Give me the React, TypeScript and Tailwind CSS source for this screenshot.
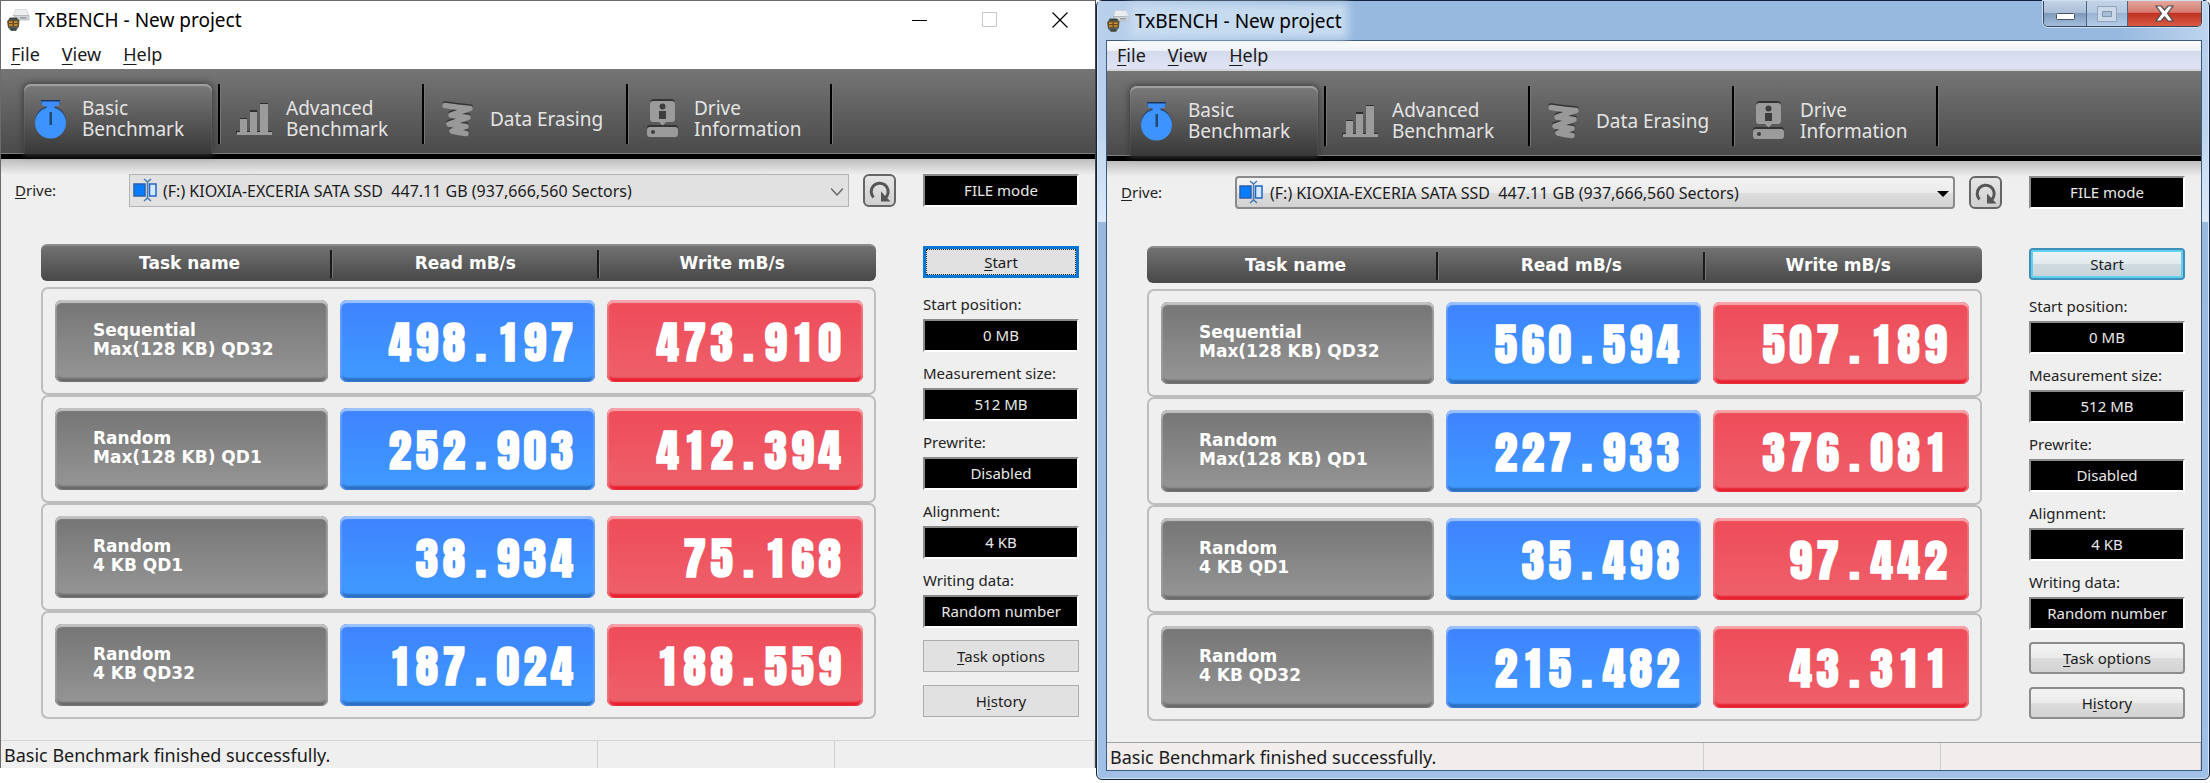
import { clsx } from 'clsx';
import type { ReactNode } from 'react';

type Theme = 'win10' | 'win7';

type Task = {
  name: [string, string];
  read: string;
  write: string;
};

type BenchProps = {
  id: string;
  theme: Theme;
  tasks: Task[];
};

const TASK_NAMES: [string, string][] = [
  ['Sequential', 'Max(128 KB) QD32'],
  ['Random', 'Max(128 KB) QD1'],
  ['Random', '4 KB QD1'],
  ['Random', '4 KB QD32'],
];

const makeTasks = (results: [string, string][]): Task[] =>
  results.map(([read, write], i) => ({ name: TASK_NAMES[i], read, write }));

const WIN10_TASKS = makeTasks([
  ['498.197', '473.910'],
  ['252.903', '412.394'],
  ['38.934', '75.168'],
  ['187.024', '188.559'],
]);

const WIN7_TASKS = makeTasks([
  ['560.594', '507.189'],
  ['227.933', '376.081'],
  ['35.498', '97.442'],
  ['215.482', '43.311'],
]);

const SETTINGS = [
  { key: 'start', label: 'Start position:', value: '0 MB' },
  { key: 'size', label: 'Measurement size:', value: '512 MB' },
  { key: 'prewrite', label: 'Prewrite:', value: 'Disabled' },
  { key: 'align', label: 'Alignment:', value: '4 KB' },
  { key: 'data', label: 'Writing data:', value: 'Random number' },
];

const AppIcon = () => (
  <svg aria-hidden="true" className="h-6 w-6 shrink-0" viewBox="0 0 24 24">
    <path d="M9.500 1.500h11L23 7.500H7.500z" fill="#eceef0" stroke="#c9ccd0" strokeWidth=".6" />
    <path d="M7 7.500h16V12H12z" fill="#d3d6d9" stroke="#a3a6aa" strokeWidth=".6" />
    <path d="M14 9.800h6.500" stroke="#85898d" strokeWidth="1.200" />
    <path d="M4 9.500h7l2.500 3-.5 6-3 4.500H5l-3-3.500-1-6z" fill="#59635c" />
    <path d="M2 12.500h10.500v6H2z" fill="#6a4a1c" />
    <path d="M3 14.200h3.500M8 14.200h3.500M3 17h3.500M8 17h3.500" stroke="#d99a3a" strokeWidth="1.500" />
    <path d="M3.500 10.800h7.500M4.500 21h5.500" stroke="#39413b" strokeWidth="1.500" />
  </svg>
);

const StopwatchIcon = () => (
  <svg aria-hidden="true" className="h-10 w-10 shrink-0" viewBox="0 0 40 40">
    <path d="M9 1h19v4H9z" fill="#1d3763" />
    <circle cx="18.500" cy="22.500" fill="#2b4370" r="15.500" />
    <path d="M9 2.500h19l-1.500 4.500h-4v4h-8V7h-4z" fill="#3d8fff" />
    <circle cx="18.500" cy="24" fill="#3d93ff" r="15.500" />
    <path d="M17.500 13H20v13h-2.500z" fill="#24466f" />
  </svg>
);

const BarsIcon = () => (
  <svg aria-hidden="true" className="h-10 w-10 shrink-0" viewBox="0 0 40 40">
    <path d="M4 19h7v2H4zM14 11h7v2h-7zM24 4h8v2h-8zM0 32h36v2H0z" fill="#2f2f2f" />
    <path d="M4 20h7v13H4zM14 13h7v20h-7zM24 5h8v28h-8z" fill="#9b9b9b" />
    <path d="M1 33h35v3H1z" fill="#9b9b9b" />
  </svg>
);

const ScribbleIcon = () => (
  <svg aria-hidden="true" className="h-10 w-10 shrink-0" fill="none" viewBox="0 0 40 40">
    <g strokeLinecap="round" strokeLinejoin="round" strokeWidth="5.500">
      <path
        d="M5 5q13 2 25 3L11 14.500q9 2 17 2.500L9 23.500q9 2 17 2.500L12 30.500q7 1.500 14 2.500"
        stroke="#333"
      />
      <path
        d="M5 6.500q13 2 25 3L11 16q9 2 17 2.500L9 25q9 2 17 2.500L12 32q7 1.500 14 2.500"
        stroke="#999"
      />
    </g>
  </svg>
);

const DriveInfoIcon = () => (
  <svg aria-hidden="true" className="h-10 w-10 shrink-0" viewBox="0 0 40 40">
    <rect fill="#333" height="21" rx="4" width="25" x="6" y="0" />
    <rect fill="#333" height="10" rx="3" width="31" x="3" y="26" />
    <path
      d="M9 2h19q3 0 3 3v15q0 3-3 3h-6l-3.500 3.500L15 23H9q-3 0-3-3V5q0-3 3-3z"
      fill="#9b9b9b"
    />
    <circle cx="18.500" cy="7.500" fill="#3d3d3d" r="3" />
    <path d="M15 12h7v8h-7z" fill="#3d3d3d" />
    <rect fill="#9b9b9b" height="10" rx="3" width="31" x="3" y="28" />
    <circle cx="9" cy="33" fill="#3d3d3d" r="2" />
  </svg>
);

const DriveIcon = () => (
  <svg aria-hidden="true" className="h-6 w-6" fill="none" viewBox="0 0 24 24">
    <path d="M1 6h11v12H1z" fill="#0a7cff" stroke="#2b5ea8" strokeWidth="1.500" />
    <path d="M16.500 6H23v12h-6.500z" fill="#d3e9ff" stroke="#1f66c4" strokeWidth="1.500" />
    <path d="M14.500 4v16M11 1l3.500 3L18 1M11 23l3.500-3 3.500 3" stroke="#4a78b0" strokeWidth="1.500" />
  </svg>
);

const ReloadIcon = () => (
  <svg aria-hidden="true" className="h-6 w-6" fill="none" viewBox="0 0 24 24">
    <path
      d="M5.500 18.500A8.500 8.500 0 1 1 19 17l-1.500 1.500"
      stroke="#555"
      strokeWidth="3"
    />
    <path d="M13 12.500v10h9.500z" fill="#555" />
  </svg>
);

const TABS: { lines: string[]; icon: ReactNode; active?: boolean }[] = [
  { lines: ['Basic', 'Benchmark'], icon: <StopwatchIcon />, active: true },
  { lines: ['Advanced', 'Benchmark'], icon: <BarsIcon /> },
  { lines: ['Data Erasing'], icon: <ScribbleIcon /> },
  { lines: ['Drive', 'Information'], icon: <DriveInfoIcon /> },
];

const MenuBar = ({ theme }: { theme: Theme }) => (
  <nav
    className={clsx(
      'flex h-[30px] items-center gap-[22px] pl-2.5 text-[18px] leading-6 text-[#1a1a1a]',
      theme === 'win7' &&
        'border-b-2 border-[#d4d4d8] bg-[linear-gradient(to_bottom,#ffffff,#eef1f9_35%,#d4dbed_36%,#dfe4f4)]',
    )}
  >
    {['File', 'View', 'Help'].map((item) => (
      <button key={item} type="button">
        <u className="underline-offset-3">{item[0]}</u>
        {item.slice(1)}
      </button>
    ))}
  </nav>
);

const Toolbar = () => (
  <div
    className="flex h-[90px] border-b-[5px] border-black bg-[linear-gradient(to_bottom,#757575,#4a4a4a)] pl-4 shadow-[inset_0_-1px_0_#808080]"
    role="tablist"
  >
    {TABS.map(({ lines, icon, active }) => (
      <div className="flex w-[204px] pt-[15px]" key={lines.join()}>
        <button
          aria-selected={!!active}
          className={clsx(
            'mr-1.5 ml-[7px] flex flex-1 items-center gap-2.5 pl-2 text-left text-[19px] leading-[21px] text-[#e4e4e4]',
            active &&
              'rounded-t-[7px] bg-[linear-gradient(to_bottom,#7a7a7a,#383838)] shadow-[inset_0_2px_1px_#a2a2a2,0_0_6px_1px_#3d3d3d]',
          )}
          role="tab"
          type="button"
        >
          {icon}
          <span>
            {lines.map((line) => (
              <span className="block whitespace-nowrap" key={line}>
                {line}
              </span>
            ))}
          </span>
        </button>
        <span className="h-[60px] w-[3px] border-r border-l-2 border-l-black border-r-[#777]" />
      </div>
    ))}
  </div>
);

const DriveRow = ({ id, theme }: { id: string; theme: Theme }) => (
  <div className="flex h-[33px] items-center pl-[14px]">
    <label className="w-[114px] text-[15px] text-[#222]" htmlFor={`${id}-drive`}>
      <u className="underline-offset-2">D</u>rive:
    </label>
    <div className="relative h-full flex-1">
      <select
        className={clsx(
          'h-full w-full appearance-none pl-[33px] text-[16px] text-[#1c1c1c]',
          theme === 'win10'
            ? 'border border-[#b3b3b3] bg-[#e1e1e1]'
            : 'rounded-[4px] border-2 border-[#8a8a8a] bg-[linear-gradient(to_bottom,#f3f3f3,#ebebeb_50%,#dddddd_51%,#d2d2d2)]',
        )}
        id={`${id}-drive`}
      >
        <option>(F:) KIOXIA-EXCERIA SATA SSD{'\u00a0 '}447.11 GB (937,666,560 Sectors)</option>
      </select>
      <span className="pointer-events-none absolute top-1 left-1">
        <DriveIcon />
      </span>
      <svg
        aria-hidden="true"
        className="pointer-events-none absolute top-3 right-1.5 h-3 w-3"
        fill="none"
        viewBox="0 0 12 12"
      >
        {theme === 'win10' ? (
          <path d="M0 2.500 6 9l6-6.500" stroke="#666" strokeWidth="1.500" />
        ) : (
          <path d="M0 3h12L6 9z" fill="#000" />
        )}
      </svg>
    </div>
    <button
      aria-label="Reload drives"
      className="ml-[14px] flex h-[33px] w-[33px] items-center justify-center rounded-[6px] border-2 border-[#666] bg-[linear-gradient(to_bottom,#e6e6e6,#cfcfcf)]"
      type="button"
    >
      <ReloadIcon />
    </button>
  </div>
);

// Every character sits in a cell of its own so that the columns line up.
const Readout = ({ value }: { value: string }) => (
  <span className="flex justify-end pt-[3px] font-[Anton,Impact,'Roboto_Condensed',sans-serif] text-[45px] leading-[45px] font-bold text-white">
    {value.split('').map((char, i) => (
      // biome-ignore lint/suspicious/noArrayIndexKey: characters repeat
      <span className="w-[27px] text-center" key={i}>
        {char}
      </span>
    ))}
  </span>
);

const TILE = 'flex h-[82px] flex-col justify-center rounded-[7px]';

const HEADERS = ['Task name', 'Read mB/s', 'Write mB/s'];

const ResultTable = ({ tasks }: { tasks: Task[] }) => (
  <table className="w-full table-fixed border-separate border-spacing-0">
    <colgroup>
      <col className="w-[35%]" />
      <col className="w-[32%]" />
      <col className="w-[33%]" />
    </colgroup>
    <thead>
      <tr className="font-['DejaVu_Sans',sans-serif] text-[17px] text-white">
        {HEADERS.map((header, i) => (
          <th className="p-0 pb-1.5" key={header}>
            <div
              className={clsx(
                'flex h-[37px] items-center border-t-2 border-[#8c8c8c] bg-[linear-gradient(to_bottom,#727272,#484848)]',
                i === 0 && 'rounded-l-[6px] pl-2',
                i === 2 && 'rounded-r-[6px] pr-3',
              )}
            >
              <span className="flex-1">{header}</span>
              {i < 2 && (
                <span className="h-7 w-[3px] border-r border-l-2 border-l-[#1a1a1a] border-r-[#777]" />
              )}
            </div>
          </th>
        ))}
      </tr>
    </thead>
    <tbody>
      {tasks.map(({ name, read, write }) => (
        <tr key={name.join()}>
          <td className="rounded-l-[7px] border-2 border-r-0 border-[#bdbdbd] py-[11px] pr-[5px] pl-3">
            <div
              className={clsx(
                TILE,
                "bg-[linear-gradient(to_bottom,#757575,#969696)] pb-0.5 pl-[38px] font-['DejaVu_Sans',sans-serif] text-[17px] leading-[19px] font-bold text-white shadow-[inset_0_3px_1px_#c2c2c2,inset_2px_0_1px_#9a9a9a,inset_-2px_0_1px_#9a9a9a,inset_0_-4px_2px_#6a6a6a]",
              )}
            >
              <span>{name[0]}</span>
              <span>{name[1]}</span>
            </div>
          </td>
          <td className="border-y-2 border-[#bdbdbd] py-[11px] pr-[5px] pl-[7px]">
            <div
              className={clsx(
                TILE,
                'bg-[linear-gradient(to_bottom,#3f82ff,#3f9bff)] pr-5 shadow-[inset_0_3px_1px_#9cc2ff,inset_2px_0_1px_#5b9aff,inset_-2px_0_1px_#5b9aff,inset_0_-4px_2px_#2d6fc0]',
              )}
            >
              <Readout value={read} />
            </div>
          </td>
          <td className="rounded-r-[7px] border-2 border-l-0 border-[#bdbdbd] py-[11px] pr-[11px] pl-[7px]">
            <div
              className={clsx(
                TILE,
                'bg-[linear-gradient(to_bottom,#ee4b58,#ee616b)] pr-5 shadow-[inset_0_3px_1px_#f7a3aa,inset_2px_0_1px_#f06d78,inset_-2px_0_1px_#f06d78,inset_0_-4px_2px_#e6202f]',
              )}
            >
              <Readout value={write} />
            </div>
          </td>
        </tr>
      ))}
    </tbody>
  </table>
);

const FIELD =
  'flex h-[33px] items-center justify-center border-2 border-t-[#8a8a8a] border-r-white border-b-white border-l-[#8a8a8a] bg-black text-[15px] text-[#e8e8e8]';

const SideButton = ({
  theme,
  primary,
  children,
}: {
  theme: Theme;
  primary?: boolean;
  children: ReactNode;
}) => (
  <button
    className={clsx(
      'h-8 w-full text-[15px] text-[#1c1c1c]',
      theme === 'win10' && !primary && 'border border-[#adadad] bg-[#e1e1e1]',
      theme === 'win10' &&
        primary &&
        'bg-[#e1e1e1] outline-1 -outline-offset-4 outline-dotted outline-[#222] shadow-[inset_0_0_0_3px_#0b78d6]',
      theme === 'win7' &&
        !primary &&
        'rounded-[4px] border-2 border-[#8c8c8c] bg-[linear-gradient(to_bottom,#f3f3f3,#ebebeb_50%,#dddddd_51%,#d2d2d2)]',
      theme === 'win7' &&
        primary &&
        'rounded-[4px] border-2 border-[#3f8fb8] bg-[linear-gradient(to_bottom,#eef3f5,#e2eaee_50%,#cfdbe1_51%,#c5d4da)] shadow-[inset_0_0_0_2px_#5fd0f0]',
    )}
    type="button"
  >
    {children}
  </button>
);

const SidePanel = ({ id, theme }: { id: string; theme: Theme }) => (
  <aside className="w-[156px] shrink-0 text-[15px] text-[#222]">
    <output className={FIELD}>FILE mode</output>
    <div className="mt-[39px] mb-[11px]">
      <SideButton primary theme={theme}>
        {theme === 'win10' ? (
          <>
            <u className="underline-offset-2">S</u>tart
          </>
        ) : (
          'Start'
        )}
      </SideButton>
    </div>
    {SETTINGS.map(({ key, label, value }) => (
      <div className="mb-1.5" key={key}>
        <label className="block h-[30px] leading-[30px] whitespace-nowrap" htmlFor={`${id}-${key}`}>
          {label}
        </label>
        <output className={FIELD} id={`${id}-${key}`}>
          {value}
        </output>
      </div>
    ))}
    <div className="mt-3 flex flex-col gap-[13px]">
      <SideButton theme={theme}>
        <u className="underline-offset-2">T</u>ask options
      </SideButton>
      <SideButton theme={theme}>
        H<u className="underline-offset-2">i</u>story
      </SideButton>
    </div>
  </aside>
);

const StatusBar = ({ theme }: { theme: Theme }) => (
  <footer
    className={clsx(
      'flex h-7 border-t',
      theme === 'win10' ? 'border-[#d5d5d5] bg-[#efefef]' : 'border-[#a0a0a0] bg-[#f1eded]',
    )}
  >
    <p className="flex-1 pl-[3px] text-[18px] leading-7 text-[#1a1a1a]">
      Basic Benchmark finished successfully.
    </p>
    <span className="w-[237px] border-l border-[#d0d0d0]" />
    <span className="w-[261px] border-x border-[#d0d0d0]" />
  </footer>
);

const Bench = ({ id, theme, tasks }: BenchProps) => (
  <div className="bg-[#efefef]">
    <div className={theme === 'win10' ? 'bg-white' : ''}>
      <MenuBar theme={theme} />
    </div>
    <Toolbar />
    <div className="flex gap-[27px] bg-[linear-gradient(to_bottom,#bdbdbd,#efefef_16px)] pt-[15px] pr-4 pb-[21px]">
      <div className="min-w-0 flex-1">
        <DriveRow id={id} theme={theme} />
        <div className="mt-[37px] mr-5 ml-10">
          <ResultTable tasks={tasks} />
        </div>
      </div>
      <SidePanel id={id} theme={theme} />
    </div>
    <StatusBar theme={theme} />
  </div>
);

const Win10Window = () => (
  <section className="self-start border-t border-r border-l border-t-[#6b6b6b] border-r-[#444] border-l-[#6b6b6b]">
    <header className="flex h-[38px] items-center gap-[5px] bg-white pl-[5px]">
      <AppIcon />
      <h1 className="flex-1 text-[19px] text-black">TxBENCH - New project</h1>
      <div className="flex h-full">
        <button aria-label="Minimize" className="flex w-[70px] items-center justify-center" type="button">
          <svg className="h-4 w-4" viewBox="0 0 16 16">
            <path d="M0 8.500h15" stroke="#000" />
          </svg>
        </button>
        <button
          aria-label="Maximize"
          className="flex w-[70px] items-center justify-center"
          disabled
          type="button"
        >
          <svg className="h-4 w-4" fill="none" viewBox="0 0 16 16">
            <path d="M.5.5h14v14H.5z" stroke="#c8c8c8" />
          </svg>
        </button>
        <button aria-label="Close" className="flex w-[70px] items-center justify-center" type="button">
          <svg className="h-4 w-4" fill="none" viewBox="0 0 16 16">
            <path d="m.5.5 15 15m0-15-15 15" stroke="#000" strokeWidth="1.200" />
          </svg>
        </button>
      </div>
    </header>
    <Bench id="win10" tasks={WIN10_TASKS} theme="win10" />
  </section>
);

const Win7Window = () => (
  <section className="self-start rounded-[6px] border border-[#14233b] bg-[linear-gradient(to_bottom,#b5cde9,#bad2ed_120px,#dceaf8_221px,#98b9dd_221px,#a0c0e6)] pr-[7px] pb-2 pl-[9px] shadow-[inset_0_0_0_1px_#d5e5f5]">
    <header className="-mr-1.5 -ml-2 flex h-[39px] items-start bg-[linear-gradient(to_right,#bad1eb,#97b9df_18%,#97b9df_92%,#bdd4ee)] pl-2">
      <div className="flex h-full flex-1 items-center gap-[5px]">
        <AppIcon />
        <h1 className="bg-[#c6daf0] text-[19px] leading-6 text-black shadow-[0_0_8px_6px_#c6daf0]">
          TxBENCH - New project
        </h1>
      </div>
      <div className="mr-1.5 flex h-[26px] overflow-hidden rounded-b-[5px] border border-t-0 border-[#33475f] shadow-[0_0_0_1px_#d0e0f2]">
        <button
          aria-label="Minimize"
          className="flex w-[43px] items-center justify-center border-r border-[#4e6580] bg-[linear-gradient(to_bottom,#c3d3e6,#a9bdd6_48%,#7f99ba_50%,#a3bedd)] pt-1.5"
          type="button"
        >
          <svg className="h-[7px] w-[19px]" viewBox="0 0 19 7">
            <rect fill="#fff" height="6" rx="1" stroke="#4a5360" width="18" x=".5" y=".5" />
          </svg>
        </button>
        <button
          aria-label="Maximize"
          className="flex w-[41px] items-center justify-center border-r border-[#4e6580] bg-[linear-gradient(to_bottom,#c3d3e6,#b3c8e0_48%,#9bb4d3_50%,#b3cbe6)]"
          disabled
          type="button"
        >
          <svg className="h-4 w-5" fill="none" viewBox="0 0 20 16">
            <path d="M.5.500h19v15H.5z" fill="#cbd8e8" stroke="#8fa3bb" />
            <path d="M5.500 5.500h9v5h-9z" fill="#a6bcd6" stroke="#8195ad" />
          </svg>
        </button>
        <button
          aria-label="Close"
          className="flex w-[73px] items-center justify-center bg-[linear-gradient(to_bottom,#e3a79c,#d57a6c_45%,#c03222_50%,#d95a42)]"
          type="button"
        >
          <svg className="h-[17px] w-[19px]" viewBox="0 0 19 17">
            <path
              d="M1 1h5l3.500 4L13 1h5l-5.500 7.500L18 16h-5l-3.500-4L6 16H1l5.500-7.500z"
              fill="#fff"
              stroke="#4d4d55"
              strokeWidth="1.200"
            />
          </svg>
        </button>
      </div>
    </header>
    <div className="border border-[#3c5a82]">
      <Bench id="win7" tasks={WIN7_TASKS} theme="win7" />
    </div>
  </section>
);

const App = () => (
  <main className="grid grid-cols-[1096fr_1114fr] bg-white font-['Noto_Sans',sans-serif]">
    <Win10Window />
    <Win7Window />
  </main>
);

export default App;
